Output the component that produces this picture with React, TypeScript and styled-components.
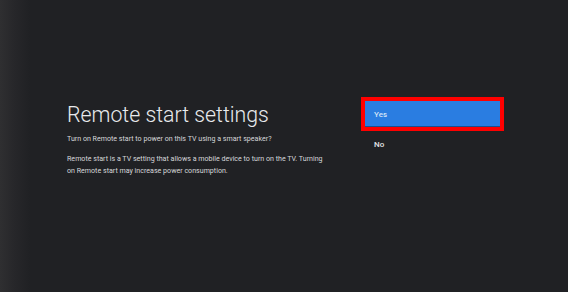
import styled, { createGlobalStyle } from "styled-components";

const GlobalStyle = createGlobalStyle`
  html, body {
    margin: 0;
    padding: 0;
    background-color: #202124;
  }
  body {
    font-family: Roboto, "Liberation Sans", sans-serif;
  }
`;

const Screen = styled.div`
  width: 568px;
  height: 292px;
  box-sizing: border-box;
  padding: 97px 0 0 67px;
  display: flex;
  align-items: flex-start;
  background: linear-gradient(
    to right,
    #2f2f31 0px,
    #27272a 14px,
    #202124 30px,
    #202124 100%
  );
  overflow: hidden;
`;

const InfoColumn = styled.div`
  width: 260px;
  padding-top: 5px;
  display: flex;
  flex-direction: column;
`;

const Title = styled.h1`
  margin: 0;
  font-size: 21.3px;
  line-height: 26px;
  font-weight: 300;
  color: #e8eaed;
  white-space: nowrap;
`;

const Text = styled.p<{ $gap: number }>`
  margin: ${(p) => p.$gap}px 0 0;
  font-size: 7.1px;
  line-height: 12px;
  color: #d6d7da;
`;

const OptionList = styled.div`
  margin-left: 34px;
  padding-top: 4px;
  width: 143px;
  display: flex;
  flex-direction: column;
  gap: 4px;
`;

const Option = styled.div<{ $focused?: boolean }>`
  height: 26px;
  margin: 0 4px;
  padding-left: 9px;
  display: flex;
  align-items: center;
  font-size: 8px;
  font-weight: 500;
  color: ${(p) => (p.$focused ? "#d4e4f8" : "#e4e5e7")};
  background-color: ${(p) => (p.$focused ? "#2a7de1" : "transparent")};
  outline: ${(p) => (p.$focused ? "4px solid #ff0000" : "none")};
  box-shadow: ${(p) => (p.$focused ? "inset 0 -1px 0 #1d4f8c" : "none")};
`;

function App() {
  return (
    <>
      <GlobalStyle />
      <Screen>
        <InfoColumn>
          <Title>Remote start settings</Title>
          <Text $gap={5}>
            Turn on Remote start to power on this TV using a smart speaker?
          </Text>
          <Text $gap={8}>
            Remote start is a TV setting that allows a mobile device to turn on
            the TV. Turning on Remote start may increase power consumption.
          </Text>
        </InfoColumn>
        <OptionList>
          <Option $focused>Yes</Option>
          <Option>No</Option>
        </OptionList>
      </Screen>
    </>
  );
}

export default App;
